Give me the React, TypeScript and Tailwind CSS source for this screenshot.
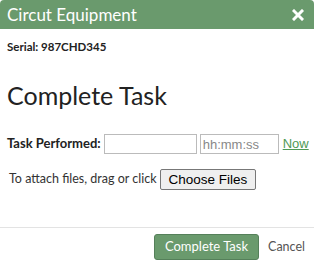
import React from "react";

export default function App() {
  const sans = { fontFamily: "Lato, 'Noto Sans', sans-serif" };
  const arial = { fontFamily: "'Liberation Sans', Arial, sans-serif" };
  return (
    <div className="w-[314px] h-[265px] bg-white overflow-hidden" style={sans}>
      <div className="h-[29px] bg-[#6a9a6d] rounded-tl-[4px] rounded-tr-[4px] flex items-center justify-between pl-[7px] pr-[10px]">
        <span className="text-white text-[17px] leading-none">Circut Equipment</span>
        <svg width="12" height="12" viewBox="0 0 12 12">
          <path d="M2 2 L10 10 M10 2 L2 10" stroke="white" strokeWidth="3" strokeLinecap="square" />
        </svg>
      </div>
      <div className="px-[7px]">
        <div className="mt-[11px] text-[11.5px] font-bold text-[#222] leading-[14px]">Serial: 987CHD345</div>
        <h1 className="mt-[26px] text-[25px] text-[#222] leading-[30px]">Complete Task</h1>
        <div className="mt-[24px] flex items-center whitespace-nowrap">
          <span className="shrink-0 text-[13px] font-bold text-[#222] mr-[3px]">Task Performed:</span>
          <input className="shrink-0 w-[93px] h-[20px] border border-[#bbb] px-[2px] text-[13px]" />
          <input
            placeholder="hh:mm:ss"
            className="shrink-0 ml-[3px] w-[79px] h-[20px] border border-[#bbb] px-[2px] text-[13px] placeholder:text-[#888]"
            style={arial}
          />
          <a className="shrink-0 ml-[4px] text-[13px] text-[#4f9a55] underline" style={arial}>Now</a>
        </div>
        <div className="mt-[15px] flex items-center pl-[2px] whitespace-nowrap">
          <span className="text-[12.5px] text-[#333]">To attach files, drag or click</span>
          <button
            className="ml-[3px] h-[21px] px-[8px] border border-[#777] rounded-[2px] bg-[#efefef] text-[13.5px] text-black"
            style={arial}
          >
            Choose Files
          </button>
        </div>
      </div>
      <div className="mt-[37px] border-t border-[#e3e3e3]" />
      <div className="flex justify-end items-center mt-[6px] pr-[9px]">
        <button className="h-[26px] px-[10px] bg-[#6a9a6d] border border-[#55805a] rounded-[3px] text-white text-[13px]">Complete Task</button>
        <span className="ml-[9px] text-[12.5px] text-[#555]">Cancel</span>
      </div>
    </div>
  );
}
